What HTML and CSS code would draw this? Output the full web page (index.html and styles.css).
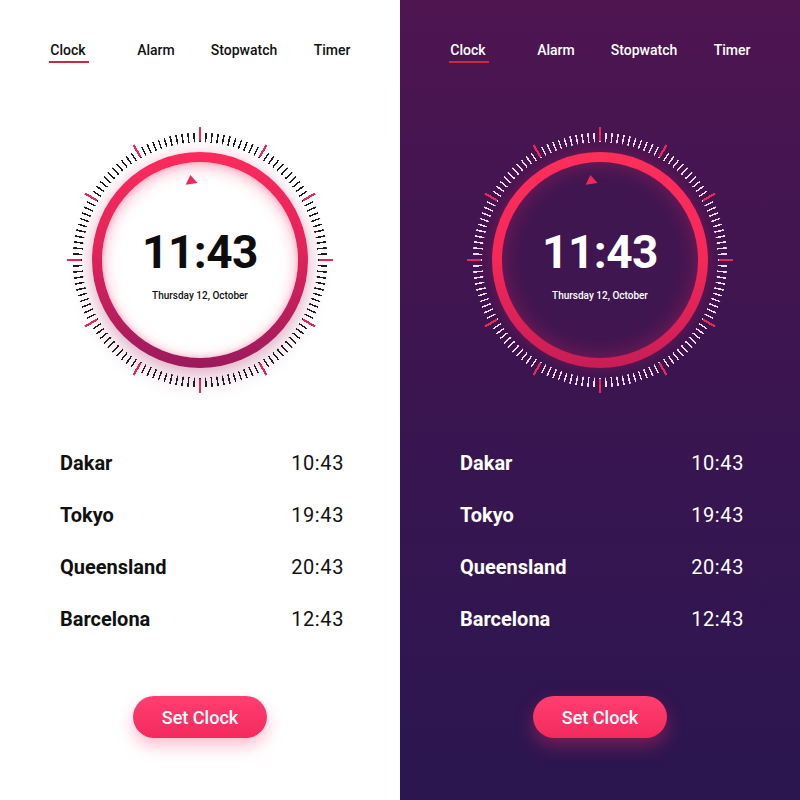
FILE: index.html
```html
<!DOCTYPE html>
<html>
<head>
<meta charset="utf-8">
<link rel="stylesheet" href="styles.css">
</head>
<body>
<div class="page">
  <section class="panel light">
    <nav class="tabs">
      <span class="tab active">Clock</span>
      <span class="tab">Alarm</span>
      <span class="tab">Stopwatch</span>
      <span class="tab">Timer</span>
    </nav>
    <div class="clock">
      <div class="ring">
        <div class="disc">
          <span class="pointer"></span>
          <div class="time">11:43</div>
          <div class="date">Thursday 12, October</div>
        </div>
      </div>
    </div>
    <ul class="cities">
      <li><span class="city">Dakar</span><span class="ctime">10:43</span></li>
      <li><span class="city">Tokyo</span><span class="ctime">19:43</span></li>
      <li><span class="city">Queensland</span><span class="ctime">20:43</span></li>
      <li><span class="city">Barcelona</span><span class="ctime">12:43</span></li>
    </ul>
    <button class="btn">Set Clock</button>
  </section>
  <section class="panel dark">
    <nav class="tabs">
      <span class="tab active">Clock</span>
      <span class="tab">Alarm</span>
      <span class="tab">Stopwatch</span>
      <span class="tab">Timer</span>
    </nav>
    <div class="clock">
      <div class="ring">
        <div class="disc">
          <span class="pointer"></span>
          <div class="time">11:43</div>
          <div class="date">Thursday 12, October</div>
        </div>
      </div>
    </div>
    <ul class="cities">
      <li><span class="city">Dakar</span><span class="ctime">10:43</span></li>
      <li><span class="city">Tokyo</span><span class="ctime">19:43</span></li>
      <li><span class="city">Queensland</span><span class="ctime">20:43</span></li>
      <li><span class="city">Barcelona</span><span class="ctime">12:43</span></li>
    </ul>
    <button class="btn">Set Clock</button>
  </section>
</div>
</body>
</html>
```

FILE: styles.css
```css
* { box-sizing: border-box; }
html, body { margin: 0; padding: 0; }
body {
  width: 800px;
  height: 800px;
  overflow: hidden;
  font-family: Roboto, "Liberation Sans", sans-serif;
}
.page {
  display: grid;
  grid-template-columns: 400px 400px;
  height: 800px;
}
.panel {
  display: flex;
  flex-direction: column;
  align-items: center;
  height: 800px;
}
.light { background: #ffffff; color: #111111; }
.dark {
  background: linear-gradient(180deg, #4e1551 0%, #3c1550 45%, #2b1650 100%);
  color: #ffffff;
}

/* tabs */
.tabs {
  display: grid;
  grid-template-columns: repeat(4, 88px);
  margin-top: 41px;
  align-self: flex-start;
  margin-left: 24px;
}
.tab {
  text-align: center;
  font-size: 14px;
  font-weight: 500;
  line-height: 18px;
  height: 22px;
  position: relative;
}
.tab.active::after {
  content: "";
  position: absolute;
  left: 25px;
  right: 23px;
  top: 20px;
  height: 2px;
  background: #cc2842;
}

/* clock */
.clock {
  position: relative;
  width: 270px;
  height: 270px;
  margin-top: 62px;
  display: flex;
  align-items: center;
  justify-content: center;
}
.clock::before,
.clock::after {
  content: "";
  position: absolute;
  inset: 0;
  border-radius: 50%;
}
.clock::before {
  background: repeating-conic-gradient(from -0.35deg, var(--tick) 0deg 0.7deg, transparent 0.7deg 2.72727deg);
  -webkit-mask: radial-gradient(circle at 50% 50%, transparent 117.5px, #000 118px, #000 127px, transparent 127.5px);
  mask: radial-gradient(circle at 50% 50%, transparent 117.5px, #000 118px, #000 127px, transparent 127.5px);
}
.clock::after {
  background: repeating-conic-gradient(from -0.5deg, #e6285a 0deg 1deg, transparent 1deg 30deg);
  -webkit-mask: radial-gradient(circle at 50% 50%, transparent 118.5px, #000 119px, #000 132.5px, transparent 133px);
  mask: radial-gradient(circle at 50% 50%, transparent 118.5px, #000 119px, #000 132.5px, transparent 133px);
}
.light .clock { --tick: #1c1c1c; }
.dark .clock { --tick: #f3dcf2; }

.ring {
  position: relative;
  z-index: 1;
  width: 216px;
  height: 216px;
  border-radius: 50%;
  padding: 10px;
}
.light .ring {
  background: linear-gradient(180deg, #fb2b5b 0%, #e3235a 45%, #9a1a5d 100%);
  box-shadow: 0 10px 22px rgba(150, 20, 90, 0.28), 0 0 12px rgba(240, 40, 90, 0.15);
}
.dark .ring {
  background: linear-gradient(180deg, #ff2e5b 0%, #f52858 50%, #c81d57 100%);
  box-shadow: 0 0 16px rgba(255, 40, 90, 0.25);
}
.disc {
  position: relative;
  width: 196px;
  height: 196px;
  border-radius: 50%;
  display: flex;
  flex-direction: column;
  align-items: center;
}
.light .disc {
  background: #ffffff;
  box-shadow: inset 0 4px 16px rgba(245, 40, 95, 0.35), inset 0 0 6px rgba(245, 40, 95, 0.25);
}
.dark .disc {
  background: #401651;
  box-shadow: inset 0 0 22px rgba(255, 40, 95, 0.32);
}
.pointer {
  position: absolute;
  left: 83px;
  top: 13px;
  width: 0;
  height: 0;
  border-left: 6px solid transparent;
  border-right: 6px solid transparent;
  border-bottom: 9px solid #f0285a;
  transform: rotate(-8deg);
}
.time {
  margin-top: 67px;
  font-size: 46px;
  line-height: 46px;
  font-weight: 700;
  letter-spacing: -0.5px;
}
.light .time { color: #0d0d0d; }
.date {
  margin-top: 15px;
  font-size: 10px;
  line-height: 12px;
  font-weight: 500;
}

/* city list */
.cities {
  list-style: none;
  margin: 42px 0 0 60px;
  padding: 0;
  width: 284px;
  align-self: flex-start;
}
.cities li {
  display: flex;
  justify-content: space-between;
  align-items: center;
  height: 52px;
}
.city {
  font-size: 20px;
  font-weight: 700;
}
.ctime {
  font-size: 20px;
  font-weight: 400;
  letter-spacing: 0.6px;
}

/* button */
.btn {
  margin-top: 51px;
  width: 134px;
  height: 42px;
  border: none;
  border-radius: 21px;
  background: linear-gradient(180deg, #ff3f6f 0%, #f42a5e 100%);
  color: #ffffff;
  font-family: Roboto, "Liberation Sans", sans-serif;
  font-size: 18px;
  font-weight: 500;
  box-shadow: 0 8px 16px rgba(255, 45, 100, 0.3);
  padding: 0;
}
.dark .btn { box-shadow: 0 8px 18px rgba(255, 45, 100, 0.35); }
```
